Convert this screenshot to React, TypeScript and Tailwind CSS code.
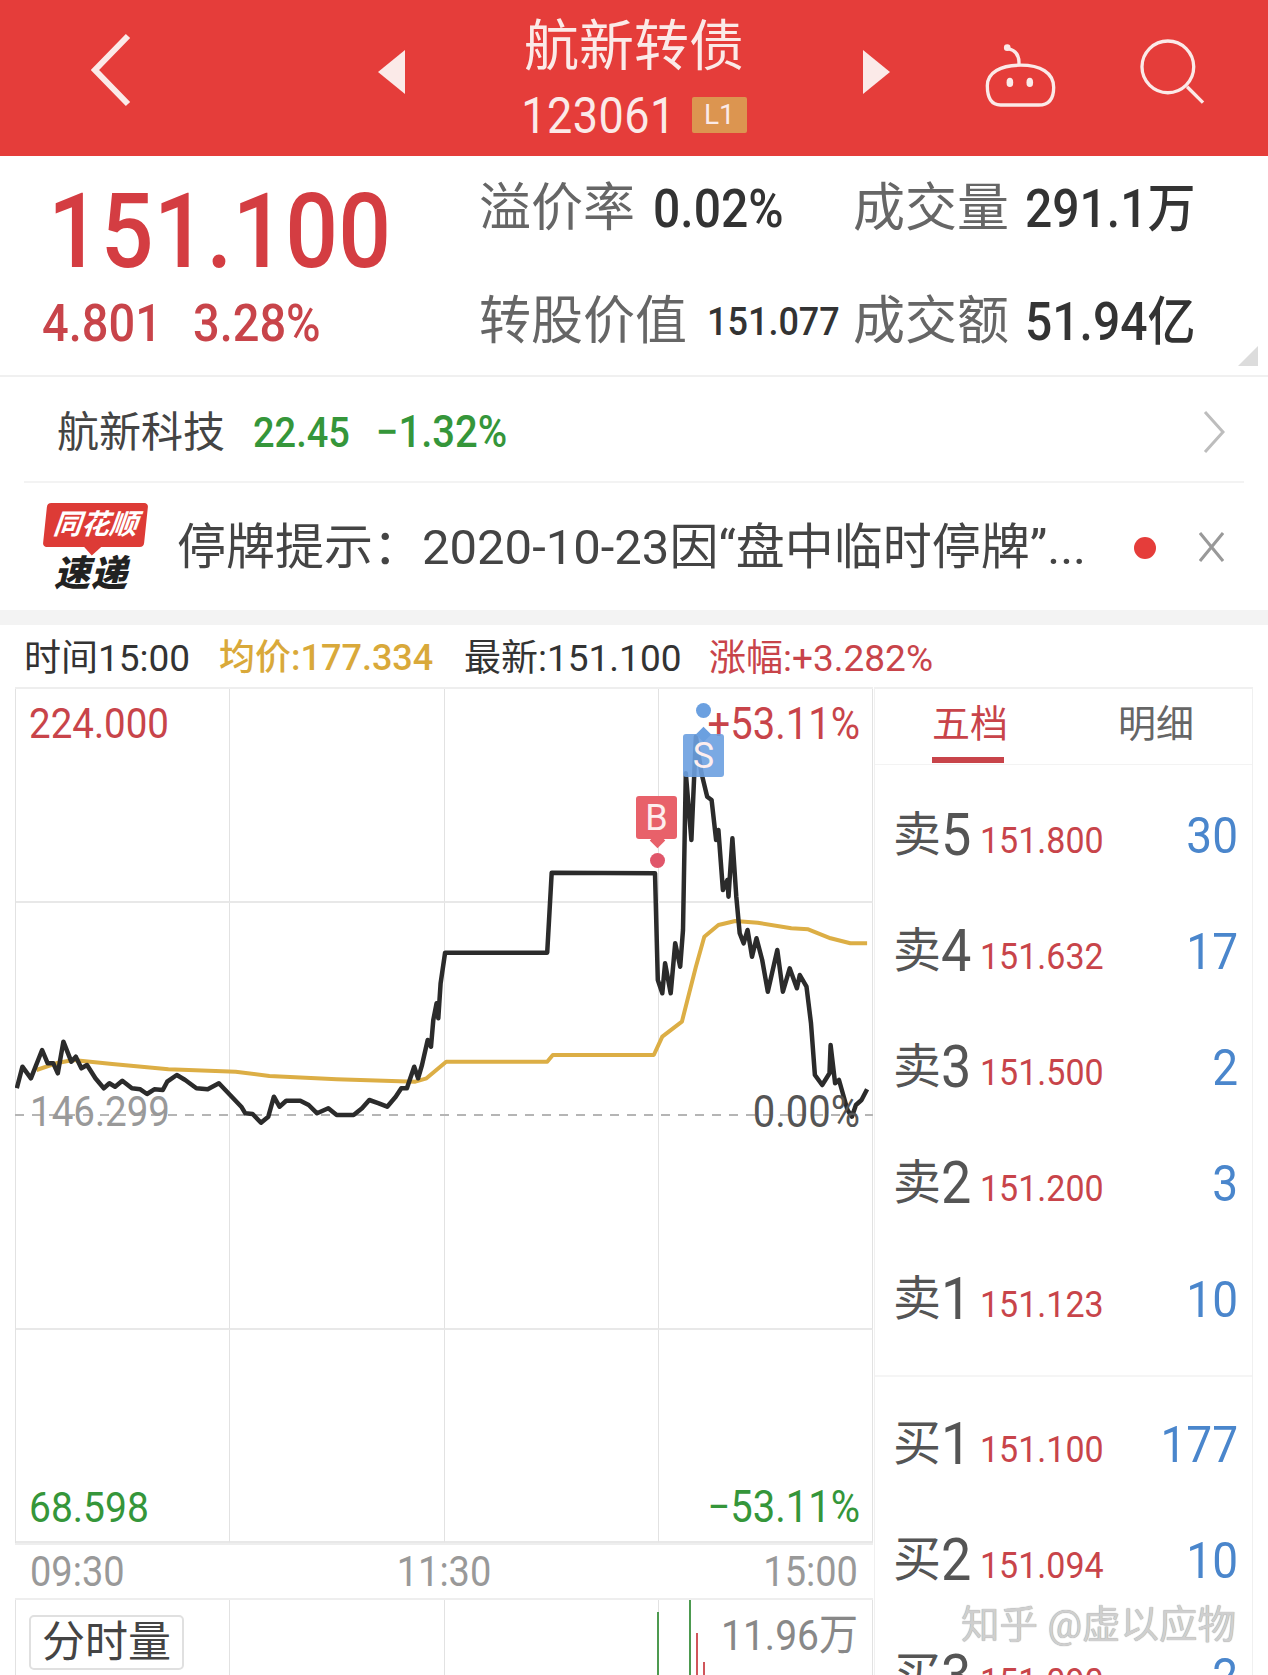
import clsx from "clsx"

const RED = "text-[#c8444a]"
const GREEN = "text-[#35963a]"
// the reference numbers are a little taller than the installed fonts
const TALL = "scale-y-[1.1]"

// traced from the reference, in 1.78x / 3x zoom coordinates
const PRICE_LINE = [
  [30, 1375], [40, 1310], [55, 1345], [75, 1260], [85, 1300], [95, 1300], [103, 1330], [113, 1235], [127, 1295], [135, 1280],
  [145, 1315], [155, 1305], [170, 1345], [185, 1375], [195, 1360], [205, 1370], [218, 1352], [235, 1375], [250, 1378], [262, 1392],
  [275, 1378], [290, 1380], [298, 1355], [315, 1335], [330, 1350], [350, 1375], [370, 1378], [390, 1360], [410, 1395], [430, 1430],
  [437, 1450], [450, 1452], [465, 1478], [478, 1460], [488, 1400], [498, 1430], [510, 1412], [535, 1412], [550, 1425], [565, 1450],
  [585, 1435], [600, 1455], [630, 1455], [645, 1435], [658, 1410], [675, 1420], [690, 1430], [705, 1400], [715, 1375], [725, 1375],
  [738, 1310], [745, 1345], [752, 1305], [762, 1230], [768, 1250], [772, 1170], [778, 1120], [781, 1165], [785, 1060], [793, 968], [975, 968], [983, 728],
  [1167, 730], [1172, 1050], [1180, 1090], [1185, 1000], [1195, 1090], [1203, 940], [1212, 1010], [1217, 900], [1222, 430], [1232, 630],
  [1240, 320], [1250, 430], [1260, 500], [1268, 510], [1276, 630], [1280, 600], [1288, 780], [1296, 750], [1298, 800], [1305, 625],
  [1312, 800], [1318, 910], [1325, 940], [1332, 900], [1340, 980], [1348, 925], [1358, 990], [1368, 1085], [1385, 960], [1395, 1085],
  [1407, 1015], [1420, 1075], [1425, 1035], [1437, 1070], [1445, 1180], [1452, 1335], [1465, 1365], [1478, 1330], [1480, 1245], [1488, 1360],
  [1495, 1350], [1510, 1440], [1518, 1460], [1525, 1425], [1535, 1410], [1545, 1378],
]

const AVG_LINE = [
  [65, 1320], [100, 1300], [130, 1290], [200, 1302], [300, 1318], [420, 1325], [480, 1338], [600, 1348], [740, 1355], [760, 1345],
  [795, 1295], [975, 1295], [985, 1275], [1165, 1275], [1180, 1220], [1215, 1175], [1240, 1010], [1255, 920], [1280, 885], [1310, 873],
  [1350, 878], [1410, 895], [1440, 898], [1480, 925], [1515, 940], [1545, 940],
]

const toPoints = (line: number[][]) =>
  line.map(([x, y]) => `${(x / 1.7818 - 15).toFixed(1)},${(y / 3 - 59).toFixed(1)}`).join(" ")

const ASKS = [
  { label: "卖", level: "5", price: "151.800", qty: "30" },
  { label: "卖", level: "4", price: "151.632", qty: "17" },
  { label: "卖", level: "3", price: "151.500", qty: "2" },
  { label: "卖", level: "2", price: "151.200", qty: "3" },
  { label: "卖", level: "1", price: "151.123", qty: "10" },
]

const BIDS = [
  { label: "买", level: "1", price: "151.100", qty: "177" },
  { label: "买", level: "2", price: "151.094", qty: "10" },
  { label: "买", level: "3", price: "151.090", qty: "2" },
]

function OrderRow({ label, level, price, qty }: { label: string; level: string; price: string; qty: string }) {
  return (
    <div className="flex h-[116px] shrink-0 items-center pl-[18px] pr-[14px]">
      <div className="flex w-[87px] items-center text-[#555]">
        <span className="text-[48px] leading-none">{label}</span>
        <span className={clsx("text-[54px] leading-none", TALL)}>{level}</span>
      </div>
      <span className={clsx("mt-[10px] text-[34px] leading-none", TALL, RED)}>{price}</span>
      <span className={clsx("ml-auto text-[46px] leading-none text-[#4a86cc]", TALL)}>{qty}</span>
    </div>
  )
}

function StatRow({ name, value, valueClass }: { name: string; value: string; valueClass: string }) {
  return (
    <div className="flex items-center">
      <span className="text-[52px] leading-none text-[#666]">{name}</span>
      <span className={clsx("leading-none font-medium text-[#333]", TALL, valueClass)}>{value}</span>
    </div>
  )
}

function Header() {
  return (
    <header className="flex h-[156px] items-center bg-[#e53d3a] text-[#fbeae8]">
      <svg className="mb-[16px] ml-[91px] h-[74px] w-[40px]" viewBox="0 0 40 74" fill="none">
        <path d="M37 3 4 37l33 34" stroke="currentColor" strokeWidth="6" />
      </svg>
      <svg className="mb-[12px] ml-[247px] h-[44px] w-[27px]" viewBox="0 0 27 44">
        <path d="M27 0v44L0 22z" fill="currentColor" />
      </svg>
      <div className="flex w-[458px] flex-col items-center">
        <span className="text-[55px] leading-none">航新转债</span>
        <div className="mt-[19px] flex items-center">
          <span className={clsx("text-[45px] leading-none tracking-[0.5px]", TALL)}>123061</span>
          <span className="ml-[16px] flex h-[36px] w-[55px] items-center justify-center rounded-[2px] bg-[#dc9550] text-[28px] leading-none">
            L1
          </span>
        </div>
      </div>
      <svg className="mb-[12px] h-[44px] w-[27px]" viewBox="0 0 27 44">
        <path d="M0 0v44l27-22z" fill="currentColor" />
      </svg>
      <svg className="mb-[6px] ml-[92px] h-[68px] w-[77px]" viewBox="70 55 230 205" fill="none" stroke="currentColor" strokeWidth="10">
        <path d="M85 190c0-40 40-62 100-62s100 22 100 67c0 40-20 53-45 53H125c-25 0-40-18-40-58z" />
        <path d="M180 128c3-30-10-45-32-50" />
        <circle cx="145" cy="75" r="10" fill="currentColor" stroke="none" />
        <ellipse cx="153" cy="180" rx="10" ry="14" fill="currentColor" stroke="none" />
        <ellipse cx="213" cy="180" rx="10" ry="14" fill="currentColor" stroke="none" />
      </svg>
      <svg className="mb-[12px] ml-[80px] h-[68px] w-[68px]" viewBox="535 50 205 205" fill="none" stroke="currentColor" strokeWidth="10">
        <circle cx="622" cy="137" r="78" />
        <path d="m680 197 48 48" />
      </svg>
    </header>
  )
}

function Summary() {
  return (
    <section className="relative flex h-[221px] border-b-2 border-[#f0f0f0]">
      <div className="w-[479px] shrink-0">
        <div className="flex h-[150px] items-center pl-[48px] text-[93px] leading-none font-medium text-[#d43d42]">
          <span className="scale-y-[1.12]">151.100</span>
        </div>
        <div className={clsx("-mt-[4px] flex h-[40px] items-center gap-[31px] pl-[42px] text-[47px] leading-none font-medium", RED)}>
          <span className={TALL}>4.801</span>
          <span className={TALL}>3.28%</span>
        </div>
      </div>
      <div className="grid h-[226px] grid-cols-[374px_1fr] grid-rows-[106px_120px]">
        <StatRow name="溢价率" value="0.02%" valueClass="ml-[18px] text-[48px]" />
        <StatRow name="成交量" value="291.1万" valueClass="ml-[16px] text-[48px]" />
        <StatRow name="转股价值" value="151.077" valueClass="ml-[20px] text-[36px]" />
        <StatRow name="成交额" value="51.94亿" valueClass="ml-[16px] text-[48px]" />
      </div>
      {/* expand corner */}
      <div className="absolute top-[190px] right-[10px] h-0 w-0 border-b-[20px] border-l-[20px] border-b-[#dcdcdc] border-l-transparent" />
    </section>
  )
}

function StockRow() {
  return (
    <section className="mx-[24px] flex h-[106px] items-center border-b-2 border-[#f3f3f3] pt-[8px] pl-[33px]">
      <span className="text-[42px] leading-none text-[#444]">航新科技</span>
      <span className={clsx("ml-[28px] text-[38px] leading-none font-medium", TALL, GREEN)}>22.45</span>
      <span className={clsx("ml-[26px] text-[40px] leading-none font-medium", TALL, GREEN)}>−1.32%</span>
      <svg className="mr-[19px] mb-[2px] ml-auto h-[42px] w-[22px]" viewBox="0 0 22 42" fill="none">
        <path d="m2 1 18 20L2 41" stroke="#bdbdbd" strokeWidth="3" />
      </svg>
    </section>
  )
}

function Notice() {
  return (
    <section className="flex h-[142px] items-center border-b-[15px] border-[#f3f3f3] pt-[2px]">
      <div className="ml-[43px] flex w-[104px] shrink-0 flex-col items-center">
        <div className="relative flex h-[44px] w-[101px] -skew-x-6 items-center justify-center rounded-[4px] bg-[#dd3b36]">
          <span className="text-[28px] leading-none font-bold text-white italic">同花顺</span>
          <div className="absolute -bottom-[6px] left-[44px] h-[12px] w-[12px] rotate-45 bg-[#dd3b36]" />
        </div>
        <span className="mt-[9px] mr-[8px] text-[36px] leading-none font-black tracking-[1px] text-[#222] italic">速递</span>
      </div>
      <span className="ml-[30px] text-[49px] leading-none whitespace-nowrap text-[#444]">
        停牌提示：2020-10-23因“盘中临时停牌”...
      </span>
      <div className="ml-auto h-[22px] w-[22px] shrink-0 rounded-full bg-[#e53d3a]" />
      <svg className="mr-[44px] mb-[2px] ml-[43px] h-[30px] w-[25px] shrink-0" viewBox="0 0 25 30" fill="none">
        <path d="m1 1 23 28M24 1 1 29" stroke="#999" strokeWidth="3" />
      </svg>
    </section>
  )
}

function InfoBar() {
  return (
    <div className="flex h-[62px] items-center pt-[4px] pl-[24px] text-[37px] leading-none whitespace-nowrap">
      <span className="w-[195px] text-[#333]">时间15:00</span>
      <span className="w-[245px] text-[36px] font-medium text-[#d9a93a]">均价:177.334</span>
      <span className="w-[245px] text-[#333]">最新:151.100</span>
      <span className={RED}>涨幅:+3.282%</span>
    </div>
  )
}

function Marker({ letter, className, dotClass }: { letter: string; className: string; dotClass: string }) {
  return (
    <>
      <div className={clsx("absolute flex h-[43px] w-[41px] items-center justify-center rounded-[3px] text-[36px] leading-none text-[#fdeeee]", className)}>
        {letter}
      </div>
      <div className={clsx("absolute h-[15px] w-[15px] rounded-full", dotClass)} />
    </>
  )
}

function PriceChart() {
  return (
    <div className="relative h-[856px] border-t-2 border-[#eeeeee]">
      <div className="grid h-full grid-cols-4 grid-rows-4 border-l border-[#e2e2e2]">
        {Array.from({ length: 16 }).map((_, i) => (
          <div key={i} className={clsx("border-r border-[#e2e2e2]", i >= 4 && i < 8 ? "" : "border-b-2 border-b-[#e8e8e8]")} />
        ))}
      </div>
      <svg className="absolute inset-0 h-full w-full" viewBox="0 0 858 854" fill="none">
        <line x1="0" y1="426" x2="858" y2="426" stroke="#b5b5b5" strokeWidth="2" strokeDasharray="9 8" />
        <polyline points={toPoints(AVG_LINE)} stroke="#dcae45" strokeWidth="4" strokeLinejoin="round" />
        <polyline points={toPoints(PRICE_LINE)} stroke="#2b2b2b" strokeWidth="4.5" strokeLinejoin="round" />
      </svg>

      <span className={clsx("absolute top-[16px] left-[14px] text-[38.5px] leading-none", TALL, RED)}>224.000</span>
      <span className={clsx("absolute top-[16px] right-[13px] text-[40px] leading-none", TALL, RED)}>+53.11%</span>
      <span className={clsx("absolute bottom-[15px] left-[14px] text-[39px] leading-none", TALL, GREEN)}>68.598</span>
      <span className={clsx("absolute right-[13px] bottom-[15px] text-[40px] leading-none", TALL, GREEN)}>−53.11%</span>
      <span className="absolute top-[404px] left-[15px] scale-y-[1.1] text-[38.5px] leading-none text-[#999]">146.299</span>
      <span className="absolute top-[404px] right-[13px] scale-y-[1.1] text-[40px] leading-none text-[#555]">0.00%</span>

      <Marker letter="B" className="top-[107px] left-[621px] bg-[#e8616a]" dotClass="top-[164px] left-[635px] bg-[#e0566a]" />
      <div className="absolute top-[146px] left-[637px] h-[11px] w-[11px] rotate-45 bg-[#e8616a]" />
      <div className="absolute top-[40px] left-[683px] h-[11px] w-[11px] rotate-45 bg-[#6ba0e0]" />
      <Marker letter="S" className="top-[45px] left-[668px] bg-[#6ba0e0]/90" dotClass="top-[14px] left-[681px] bg-[#6ba0e0]" />
    </div>
  )
}

function VolumeChart() {
  return (
    <div className="relative h-[77px] border-t-2 border-[#eeeeee]">
      <div className="grid h-full grid-cols-4 border-l border-[#e2e2e2]">
        {Array.from({ length: 4 }).map((_, i) => (
          <div key={i} className="border-r border-[#e2e2e2]" />
        ))}
      </div>
      <svg className="absolute inset-0 h-full w-full" viewBox="0 0 858 75" fill="none" strokeWidth="2">
        <path d="M643 12v63M675 0v75" stroke="#4d9a50" />
        <path d="M682 33v42M689 62v13" stroke="#d0555a" />
      </svg>
      <span className="absolute top-[15px] left-[14px] flex h-[55px] w-[155px] items-center justify-center rounded-[5px] border-2 border-[#e0e0e0] bg-white text-[43px] leading-none text-[#444]">
        分时量
      </span>
      <span className={clsx("absolute top-[17px] right-[15px] text-[39px] leading-none text-[#888]", TALL)}>11.96万</span>
    </div>
  )
}

function OrderBook() {
  return (
    <aside className="ml-[1px] flex h-[988px] w-[379px] flex-col border-t-2 border-r border-l border-[#f0f0f0]">
      <div className="flex h-[76px] shrink-0 border-b border-[#f3f3f3] pt-[16px]">
        <div className="ml-[57px] flex h-[58px] w-[72px] flex-col border-b-[6px] border-[#c8444a]">
          <span className={clsx("text-[38px] leading-none whitespace-nowrap", RED)}>五档</span>
        </div>
        <span className="ml-[114px] text-[38px] leading-none text-[#666]">明细</span>
      </div>
      <div className="shrink-0 border-b-2 border-[#f5f5f5] pt-[12px] pb-[18px]">
        {ASKS.map((row) => (
          <OrderRow key={row.label + row.level} {...row} />
        ))}
      </div>
      <div className="pt-[9px]">
        {BIDS.map((row) => (
          <OrderRow key={row.label + row.level} {...row} />
        ))}
      </div>
    </aside>
  )
}

export default function App() {
  return (
    <div className="relative h-[1675px] w-[1268px] overflow-hidden bg-white font-['Roboto','Noto_Sans_CJK_SC',sans-serif]">
      <Header />
      <Summary />
      <StockRow />
      <Notice />
      <InfoBar />
      <div className="flex pl-[15px]">
        <div className="w-[858px] shrink-0">
          <PriceChart />
          <div className="flex h-[55px] items-center justify-between border-t-2 border-[#eeeeee] pr-[15px] pl-[15px] text-[38px] leading-none text-[#999]">
            <span className={TALL}>09:30</span>
            <span className={TALL}>11:30</span>
            <span className={TALL}>15:00</span>
          </div>
          <VolumeChart />
        </div>
        <OrderBook />
      </div>
      {/* site watermark */}
      <span className="absolute top-[1606px] left-[961px] text-[38.5px] leading-none whitespace-nowrap text-[#cfcfcf] [text-shadow:0_0_1px_#888]">
        知乎 @虚以应物
      </span>
    </div>
  )
}
